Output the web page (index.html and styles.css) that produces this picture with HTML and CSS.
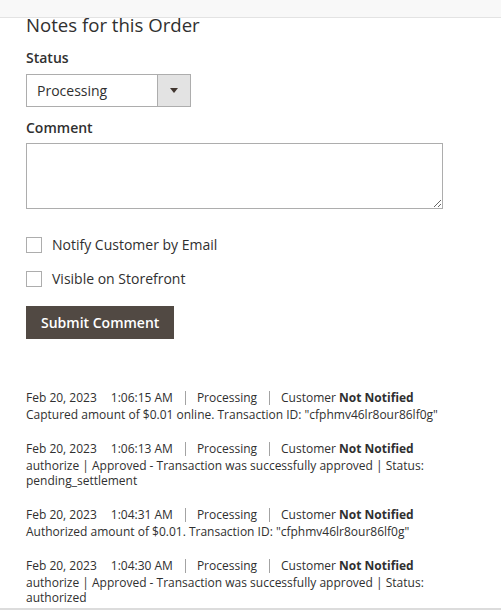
FILE: index.html
```html
<!DOCTYPE html>
<html>
<head>
<meta charset="utf-8">
<link rel="stylesheet" href="styles.css">
</head>
<body>
<div class="topbar"></div>
<div class="content">
  <h2 class="title">Notes for this Order</h2>
  <div class="field field-status">
    <label class="label">Status</label>
    <div class="select">
      <span class="select-value">Processing</span>
      <span class="select-arrow"><span class="tri"></span></span>
    </div>
  </div>
  <div class="field field-comment">
    <label class="label">Comment</label>
    <textarea class="textarea"></textarea>
  </div>
  <div class="checks">
    <label class="check"><span class="box"></span>Notify Customer by Email</label>
    <label class="check"><span class="box"></span>Visible on Storefront</label>
  </div>
  <button class="btn">Submit Comment</button>

  <ul class="notes">
    <li class="note">
      <div class="meta"><span class="date">Feb 20, 2023</span><span class="time">1:06:15 AM</span><span class="sep"></span><span class="status">Processing</span><span class="sep"></span><span class="cust">Customer <b>Not Notified</b></span></div>
      <div class="text">Captured amount of $0.01 online. Transaction ID: "cfphmv46lr8our86lf0g"</div>
    </li>
    <li class="note">
      <div class="meta"><span class="date">Feb 20, 2023</span><span class="time">1:06:13 AM</span><span class="sep"></span><span class="status">Processing</span><span class="sep"></span><span class="cust">Customer <b>Not Notified</b></span></div>
      <div class="text">authorize | Approved - Transaction was successfully approved | Status: pending_settlement</div>
    </li>
    <li class="note">
      <div class="meta"><span class="date">Feb 20, 2023</span><span class="time">1:04:31 AM</span><span class="sep"></span><span class="status">Processing</span><span class="sep"></span><span class="cust">Customer <b>Not Notified</b></span></div>
      <div class="text">Authorized amount of $0.01. Transaction ID: "cfphmv46lr8our86lf0g"</div>
    </li>
    <li class="note">
      <div class="meta"><span class="date">Feb 20, 2023</span><span class="time">1:04:30 AM</span><span class="sep"></span><span class="status">Processing</span><span class="sep"></span><span class="cust">Customer <b>Not Notified</b></span></div>
      <div class="text">authorize | Approved - Transaction was successfully approved | Status: authorized</div>
    </li>
  </ul>
</div>
<div class="bottomline"></div>
</body>
</html>
```
FILE: styles.css
```css
* { box-sizing: border-box; }
html, body { margin: 0; padding: 0; }
body {
  font-family: "Open Sans", "Liberation Sans", sans-serif;
  color: #303030;
  background: #fff;
  width: 501px;
  height: 610px;
  overflow: hidden;
  position: relative;
}
.topbar {
  height: 18px;
  background: #f8f8f8;
  border-bottom: 1px solid #e3e3e3;
}
.content {
  padding-left: 26px;
}
.title {
  margin: -1px 0 0;
  font-size: 18.6px;
  font-weight: 400;
  line-height: 16px;
  color: #303030;
}
.field-status { margin-top: 15px; }
.field-comment { margin-top: 11px; }
.label {
  display: block;
  font-size: 14px;
  font-weight: 600;
  line-height: 19px;
  margin-bottom: 7px;
}
.field-comment .label { margin-bottom: 6px; }
.select {
  display: flex;
  width: 165px;
  height: 33px;
  border: 1px solid #adadad;
  background: #fff;
}
.select-value {
  flex: 1;
  font-size: 14px;
  line-height: 31px;
  padding-left: 10px;
}
.select-arrow {
  width: 33px;
  background: #e3e3e3;
  border-left: 1px solid #adadad;
  display: flex;
  align-items: center;
  justify-content: center;
}
.tri {
  width: 0; height: 0;
  border-left: 4px solid transparent;
  border-right: 4px solid transparent;
  border-top: 5px solid #41362f;
}
.textarea {
  display: block;
  width: 417px;
  height: 66px;
  border: 1px solid #adadad;
  margin: 0;
  padding: 5px;
  font-family: inherit;
  resize: vertical;
}
.checks {
  margin-top: 26px;
  display: flex;
  flex-direction: column;
  gap: 15px;
}
.check {
  display: flex;
  align-items: center;
  font-size: 14px;
  line-height: 19px;
}
.box {
  width: 16px;
  height: 16px;
  border: 1px solid #adadad;
  background: #fff;
  margin-right: 10px;
}
.btn {
  margin-top: 18px;
  display: block;
  height: 33px;
  padding: 0 14px;
  background: #514943;
  border: 1px solid #514943;
  color: #fff;
  font-family: inherit;
  font-size: 14px;
  font-weight: 600;
}
.notes {
  list-style: none;
  margin: 49px 0 0;
  padding: 0;
  font-size: 12px;
}
.note { margin-bottom: 17px; width: 420px; }
.meta { display: flex; align-items: center; line-height: 19px; }
.text { line-height: 15px; }
.time { margin-left: 14px; }
.sep {
  display: inline-block;
  width: 1px;
  height: 14px;
  background: #a3a3a3;
  margin: 0 11px 0 12px;
}
.cust b { font-weight: 700; }
.bottomline {
  position: absolute;
  left: 0; right: 0; bottom: 0;
  height: 2px;
  background: #dcdcdc;
}
```
